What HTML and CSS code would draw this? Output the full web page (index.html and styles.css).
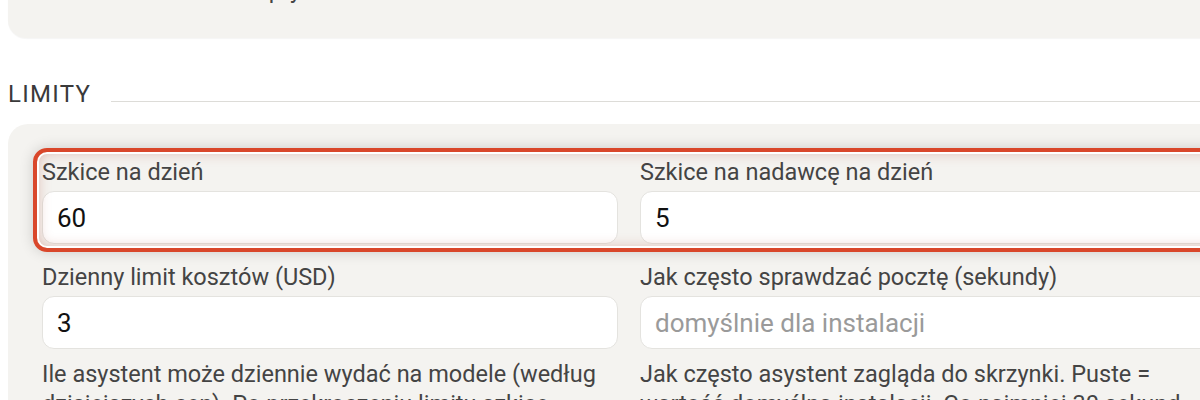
FILE: index.html
```html
<!DOCTYPE html>
<html lang="pl">
<head>
    <meta charset="UTF-8">
    <meta name="viewport" content="width=device-width, initial-scale=1.0">
    <title>Ustawienia asystenta</title>
    <link rel="stylesheet" href="styles.css">
</head>
<body>
    <div class="page">
        <div class="card card-top">
            <p class="help">Działa sprytnie.</p>
        </div>

        <div class="section-head">
            <h2>Limity</h2>
            <span class="rule"></span>
        </div>

        <div class="card">
            <div class="row highlight">
                <div class="field">
                    <label for="drafts">Szkice na dzień</label>
                    <input id="drafts" type="text" value="60">
                </div>
                <div class="field">
                    <label for="per-sender">Szkice na nadawcę na dzień</label>
                    <input id="per-sender" type="text" value="5">
                </div>
            </div>
            <div class="row">
                <div class="field">
                    <label for="cost">Dzienny limit kosztów (USD)</label>
                    <input id="cost" type="text" value="3">
                    <p class="help">Ile asystent może dziennie wydać na modele (według dzisiejszych cen). Po przekroczeniu limitu szkice czekają do jutra.</p>
                </div>
                <div class="field">
                    <label for="poll">Jak często sprawdzać pocztę (sekundy)</label>
                    <input id="poll" type="text" placeholder="domyślnie dla instalacji">
                    <p class="help">Jak często asystent zagląda do skrzynki. Puste = wartość domyślna instalacji. Co najmniej 30 sekund.</p>
                </div>
            </div>
        </div>
    </div>
</body>
</html>
```

FILE: styles.css
```css
html, body {
    margin: 0;
    padding: 0;
    background: #ffffff;
    overflow: hidden;
}
body {
    font-family: Roboto, "Noto Sans", sans-serif;
    color: #444444;
}
.page {
    width: 1242px;
    padding-left: 8px;
}
.card {
    background: #f4f3f0;
    border-radius: 20px;
    padding: 34px 34px;
}
.card-top {
    margin-top: -65px;
    padding-top: 40px;
    padding-bottom: 33px;
    border-radius: 0 0 18px 18px;
    box-shadow: 0 1px 1px rgba(0, 0, 0, 0.04);
}
.card-top .help {
    margin: 0 0 0 144px;
}
.section-head {
    display: flex;
    align-items: center;
    gap: 20px;
    margin: 41px 0 15px;
}
.section-head h2 {
    margin: 0;
    font-size: 24px;
    font-weight: 400;
    letter-spacing: 1.3px;
    text-transform: uppercase;
    color: #3a3a3a;
    line-height: 30px;
}
.section-head .rule {
    flex: 1;
    height: 1px;
    background: #dddcd8;
    margin-top: 14px;
}
.row {
    display: grid;
    grid-template-columns: 1fr 1fr;
    gap: 22px;
}
.row + .row {
    margin-top: 19px;
}
.field label {
    display: block;
    font-size: 23.5px;
    line-height: 28px;
    color: #444444;
    margin-bottom: 5px;
}
.field input {
    display: block;
    box-sizing: border-box;
    width: 100%;
    height: 53px;
    padding: 0 14px;
    border: 1px solid #e4e3df;
    border-radius: 12px;
    background: #ffffff;
    font-family: Roboto, "Noto Sans", sans-serif;
    font-size: 26px;
    color: #111111;
    outline: none;
}
.field input::placeholder {
    color: #9a9a9a;
}
.help {
    margin: 10px 0 0;
    font-size: 23.5px;
    line-height: 30px;
    color: #444444;
}
.highlight {
    position: relative;
}
.highlight::after {
    content: "";
    position: absolute;
    top: -10px;
    left: -9px;
    right: -9px;
    bottom: -8px;
    border: 4px solid #d9472b;
    border-radius: 14px;
    box-shadow: inset 0 0 0 2px #ffffff, inset 0 0 14px rgba(170, 60, 40, 0.35), 0 0 14px rgba(0, 0, 0, 0.16);
    pointer-events: none;
}
```
